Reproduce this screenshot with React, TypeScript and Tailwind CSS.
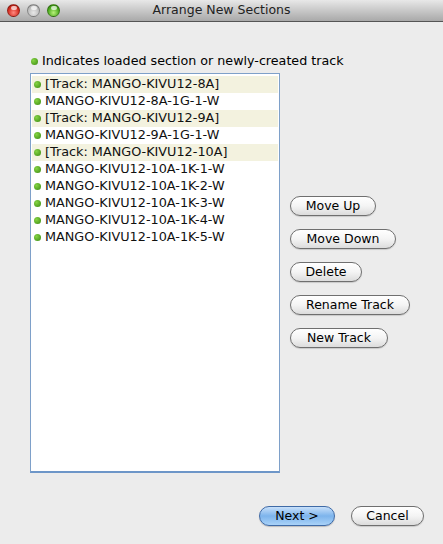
import React from "react";

const rows = [
  { label: "[Track: MANGO-KIVU12-8A]", track: true },
  { label: "MANGO-KIVU12-8A-1G-1-W", track: false },
  { label: "[Track: MANGO-KIVU12-9A]", track: true },
  { label: "MANGO-KIVU12-9A-1G-1-W", track: false },
  { label: "[Track: MANGO-KIVU12-10A]", track: true },
  { label: "MANGO-KIVU12-10A-1K-1-W", track: false },
  { label: "MANGO-KIVU12-10A-1K-2-W", track: false },
  { label: "MANGO-KIVU12-10A-1K-3-W", track: false },
  { label: "MANGO-KIVU12-10A-1K-4-W", track: false },
  { label: "MANGO-KIVU12-10A-1K-5-W", track: false },
];

const actions = [
  { label: "Move Up", w: "w-[86px]" },
  { label: "Move Down", w: "w-[106px]" },
  { label: "Delete", w: "w-[72px]" },
  { label: "Rename Track", w: "w-[120px]" },
  { label: "New Track", w: "w-[98px]" },
];

function Dot() {
  return (
    <span className="inline-block w-[7px] h-[7px] rounded-full bg-[radial-gradient(circle_at_35%_35%,#86d444,#3a8a10)] shrink-0" />
  );
}

function Light({ color }: { color: "red" | "gray" | "green" }) {
  const bg =
    color === "red"
      ? "bg-[radial-gradient(circle_at_50%_70%,#ff8a80,#d42a1e_60%,#9a1a10)]"
      : color === "green"
      ? "bg-[radial-gradient(circle_at_50%_70%,#b8f07a,#4aaa1c_60%,#2f7a0c)]"
      : "bg-[radial-gradient(circle_at_50%_70%,#e8e8e8,#bdbdbd_60%,#959595)]";
  return (
    <span className={`relative w-[13px] h-[13px] rounded-full border border-black/30 ${bg}`}>
      <span className="absolute left-[3px] top-[1px] w-[6px] h-[4px] rounded-full bg-white/70" />
    </span>
  );
}

function PillButton({ label, w }: { label: string; w: string }) {
  return (
    <button
      className={`${w} h-[20px] rounded-full border border-[#6f6f6f] bg-gradient-to-b from-white via-[#f4f4f4] to-[#dcdcdc] text-[12.5px] text-black leading-none shadow-[0_1px_1px_rgba(0,0,0,0.15)]`}
    >
      {label}
    </button>
  );
}

export default function App() {
  return (
    <div className="w-[443px] h-[544px] bg-[#ececec] flex flex-col font-['DejaVu_Sans',sans-serif] text-black overflow-hidden">
      {/* title bar */}
      <div className="h-[22px] shrink-0 relative flex items-center justify-center bg-gradient-to-b from-[#e8e8e8] to-[#a9a9a9] border-b border-[#555]">
        <div className="absolute left-[7px] top-[4px] flex gap-[7px]">
          <Light color="red" />
          <Light color="gray" />
          <Light color="green" />
        </div>
        <span className="text-[12.5px] text-[#222] leading-none">Arrange New Sections</span>
      </div>

      <div className="pl-[30px] pt-[32px] flex-1 flex flex-col">
        <div className="flex items-center gap-[4px] pl-[1px] h-[14px] text-[12.7px] leading-none">
          <Dot />
          <span>Indicates loaded section or newly-created track</span>
        </div>

        <div className="flex mt-[5px]">
          <div className="w-[250px] h-[400px] bg-white border border-[#7ea0c9] border-b-2 border-b-[#6d96c8] pt-[2px] px-[1px]">
            {rows.map((r) => (
              <div
                key={r.label}
                className={`h-[17px] flex items-center gap-[4px] pl-[2px] text-[12.8px] leading-none ${
                  r.track ? "bg-[#f3f2df]" : ""
                }`}
              >
                <Dot />
                <span className="text-[#111]">{r.label}</span>
              </div>
            ))}
          </div>

          <div className="ml-[10px] pt-[123px] flex flex-col items-start gap-[13px]">
            {actions.map((a) => (
              <PillButton key={a.label} label={a.label} w={a.w} />
            ))}
          </div>
        </div>

        <div className="flex justify-end gap-[16px] pr-[19px] mt-[33px]">
          <button className="w-[76px] h-[20px] rounded-full border border-[#3f6aa6] bg-gradient-to-b from-[#c8e0fa] via-[#7db4ec] to-[#a9d2f8] text-[12.5px] leading-none shadow-[0_1px_1px_rgba(0,0,0,0.2)]">
            Next &gt;
          </button>
          <button className="w-[73px] h-[20px] rounded-full border border-[#6f6f6f] bg-gradient-to-b from-white via-[#f4f4f4] to-[#dcdcdc] text-[12.5px] leading-none shadow-[0_1px_1px_rgba(0,0,0,0.15)]">
            Cancel
          </button>
        </div>
      </div>
    </div>
  );
}
